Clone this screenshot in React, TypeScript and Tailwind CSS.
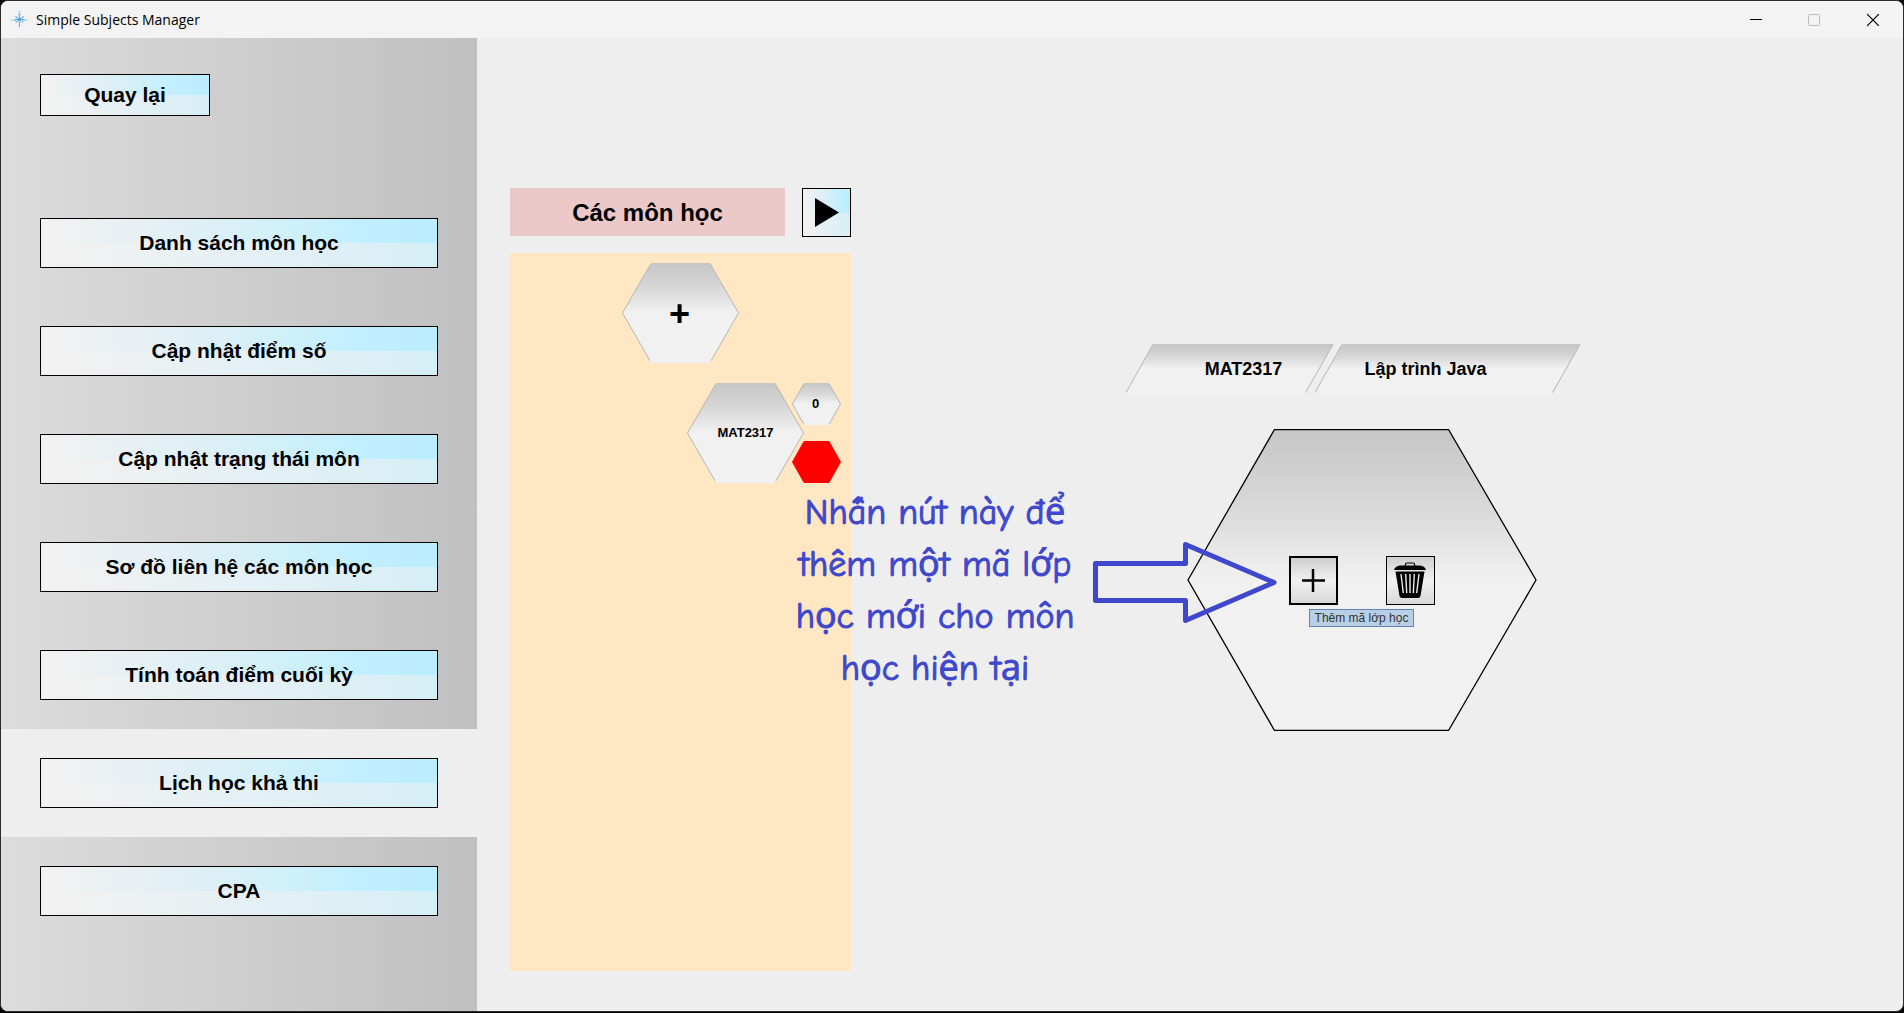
import type { ReactNode } from "react";

const menu = [
  "Danh sách môn học",
  "Cập nhật điểm số",
  "Cập nhật trạng thái môn",
  "Sơ đồ liên hệ các môn học",
  "Tính toán điểm cuối kỳ",
  "Lịch học khả thi",
  "CPA",
];
const activeItem = "Lịch học khả thi";

function GlossyButton({ className, label, children }: { className: string; label?: string; children: ReactNode }) {
  return (
    <button
      aria-label={label}
      className={`relative isolate flex items-center justify-center border border-black text-[21px] leading-6 font-bold ${className}`}
    >
      <span className="absolute inset-0 -z-10 flex flex-col">
        <span className="flex-1 bg-[linear-gradient(to_right,#f1f1f1_4%,#e0eff6_38%,#d2f0f8_58%,#c3efff_78%,#bbedff_96%)]" />
        <span className="flex-1 bg-[linear-gradient(to_right,#f1f1f1_8%,#e2f0f5_60%,#d6eff6_100%)]" />
      </span>
      {children}
    </button>
  );
}

type ShapeProps = {
  id: string;
  w: number;
  h: number;
  points: string;
  stroke?: string;
  strokeWidth?: number;
  fill?: string;
};

function Shape({ id, w, h, points, stroke = "#b4b4b4", strokeWidth = 1, fill }: ShapeProps) {
  return (
    <svg className="absolute inset-0 -z-10" width={w} height={h} viewBox={`0 0 ${w} ${h}`} aria-hidden="true">
      <defs>
        <linearGradient id={id} x1="0" y1="0" x2="0" y2="1">
          <stop offset="0" stopColor="#c6c6c6" />
          <stop offset="0.25" stopColor="#d8d8d8" />
          <stop offset="0.5" stopColor="#f1f1f1" />
          <stop offset="1" stopColor="#f1f1f1" />
        </linearGradient>
        <linearGradient id={`${id}-edge`} x1="0" y1="0" x2="0" y2="1">
          <stop offset="0" stopColor="#c6c6c6" />
          <stop offset="0.03" stopColor={stroke} />
          <stop offset="0.97" stopColor={stroke} />
          <stop offset="1" stopColor="#f1f1f1" />
        </linearGradient>
      </defs>
      <polygon
        points={points}
        fill={fill ?? `url(#${id})`}
        stroke={fill ?? (stroke === "#000" ? "#000" : `url(#${id}-edge)`)}
        strokeWidth={strokeWidth}
      />
    </svg>
  );
}

const bigHex = "0.5,50 29,0.5 88,0.5 116.5,50 88,99.5 29,99.5";
const smallHex = "0.5,21 12,0.5 37,0.5 48.5,21 37,41.5 12,41.5";

function TitleBar() {
  return (
    <header className="flex h-[37px] shrink-0 items-center bg-[#f3f3f3]">
      <svg className="ml-2.5 size-[17px]" viewBox="0 0 17 17" fill="none" aria-hidden="true">
        <path d="M8.500 2v14" stroke="#5fb3dc" strokeWidth="1.200" />
        <path d="M3 9.500l2-1h7l2 1" stroke="#4fa8d8" strokeWidth="1.200" />
        <path d="M4.500 5.500l8 6M12.500 5.500l-8 6" stroke="#4fa8d8" strokeWidth="1.200" strokeDasharray="2 0.600" />
        <path d="M0 9.500l1.500-1L3 9.500M14 9.500l1.500-1 1.500 1M7 1l1.500-1L10 1M7 3l1.500 1L10 3" stroke="#9dcfe8" />
      </svg>
      <h1 className="ml-2 flex-1 font-['Open_Sans',sans-serif] text-sm">Simple Subjects Manager</h1>
      <button aria-label="Minimize" className="flex h-full w-[58px] items-center justify-center">
        <svg width="12" height="12" viewBox="0 0 12 12" stroke="#000"><path d="M0 5.5h12" /></svg>
      </button>
      <button aria-label="Maximize" disabled className="flex h-full w-[58px] items-center justify-center">
        <svg width="12" height="12" viewBox="0 0 12 12" fill="none" stroke="#bdbdbd"><rect x="0.5" y="0.5" width="11" height="11" rx="1" /></svg>
      </button>
      <button aria-label="Close" className="flex h-full w-[60px] items-center justify-center">
        <svg width="12" height="12" viewBox="0 0 12 12" stroke="#000" strokeWidth="1.2"><path d="M0 0l12 12M12 0L0 12" /></svg>
      </button>
    </header>
  );
}

function Sidebar() {
  return (
    <nav className="w-[476px] shrink-0 bg-linear-to-r from-[#dcdcdc] to-[#c0c0c0] pt-9">
      <GlossyButton className="ml-[39px] h-[42px] w-[170px]">Quay lại</GlossyButton>
      <ul className="mt-[73px]">
        {menu.map((item) => (
          <li key={item} className={`px-[39px] py-[29px] ${item === activeItem ? "bg-[#eeeeee]" : ""}`}>
            <GlossyButton className="h-[50px] w-full">{item}</GlossyButton>
          </li>
        ))}
      </ul>
    </nav>
  );
}

function SubjectList() {
  return (
    <section className="mt-[150px] ml-[33px] flex w-[341px] shrink-0 flex-col gap-4 pb-10">
      <div className="flex justify-between">
        <h2 className="flex h-12 w-[275px] items-center justify-center bg-[#ebc9c9] pt-0.5 text-2xl font-bold">Các môn học</h2>
        <GlossyButton className="size-[49px]" label="Tiếp tục">
          <svg width="24" height="29" viewBox="0 0 24 29" aria-hidden="true"><path d="M0 0l24 14.500L0 29z" /></svg>
        </GlossyButton>
      </div>
      <div className="flex flex-1 flex-col items-center gap-5 bg-[#ffe7c3] pt-2.5">
        <button className="relative isolate h-[100px] w-[117px] pt-0.5 pr-0.5 text-4xl leading-9 font-bold">
          <Shape id="add" w={117} h={100} points={bigHex} />+
        </button>
        <div className="flex self-end pr-2.5">
          <button className="relative isolate h-[100px] w-[117px] text-[13px] font-bold">
            <Shape id="subject" w={117} h={100} points={bigHex} />MAT2317
          </button>
          <div className="-ml-3 flex flex-col justify-between">
            <button className="relative isolate h-[42px] w-[49px] pr-0.5 text-[13px] font-bold">
              <Shape id="count" w={49} h={42} points={smallHex} />0
            </button>
            <button aria-label="Xóa MAT2317" className="relative isolate h-[42px] w-[49px]">
              <Shape id="remove" w={49} h={42} points={smallHex} fill="#ff0000" />
            </button>
          </div>
        </div>
      </div>
    </section>
  );
}

function Annotation() {
  return (
    <div className="pointer-events-none absolute top-[58px] -left-[395px] flex text-[#3f48cc]">
      <p className="flex w-[286px] flex-col items-center font-['Comic_Sans_MS','Comic_Neue','Open_Sans',sans-serif] text-4xl leading-[52px] whitespace-nowrap [-webkit-text-stroke:1px_#3f48cc]">
        <span>Nhấn nút này để</span>
        <span>thêm một mã lớp</span>
        <span>học mới cho môn</span>
        <span>học hiện tại</span>
      </p>
      <svg className="mt-[53px] ml-3.5" width="190" height="90" viewBox="0 0 190 90" fill="none" stroke="currentColor" strokeWidth="5" strokeLinejoin="round" aria-hidden="true">
        <path d="M3.500 23.500H93.500V4.500L182 42.500L93.500 80.500V60.500H3.500z" />
      </svg>
    </div>
  );
}

function ClassDetail() {
  return (
    <section className="mt-[306px] ml-[274px] min-w-0 flex-1">
      <div className="flex">
        <h3 className="relative isolate flex h-[50px] w-[209px] items-center justify-center pl-7 text-lg font-bold">
          <Shape id="code" w={209} h={50} points="28,0.5 208,0.5 180,49.5 0.5,49.5" />MAT2317
        </h3>
        <h3 className="relative isolate -ml-5 flex h-[50px] w-[267px] items-center justify-center pr-11 text-lg font-bold">
          <Shape id="name" w={267} h={50} points="28,0.5 266,0.5 238,49.5 0.5,49.5" />Lập trình Java
        </h3>
      </div>
      <div className="relative isolate mt-[35px] ml-[62px] flex h-[302px] w-[350px] items-center justify-center gap-12">
        <Shape id="classes" w={350} h={302} points="1,151 87.500,0.5 261.500,0.5 349,151 261.500,301.500 87.500,301.500" stroke="#000" strokeWidth={1.3} />
        <button aria-label="Thêm mã lớp học" aria-describedby="add-tip" className="relative flex size-[49px] items-center justify-center border-2 border-black bg-[linear-gradient(#cfcfcf,#f1f1f1_50%,#d8d8d8)]">
          <svg width="23" height="23" viewBox="0 0 23 23" stroke="#000" strokeWidth="2.500" aria-hidden="true"><path d="M11 0v23M0 11.500h23" /></svg>
          <span id="add-tip" role="tooltip" className="absolute top-[51px] left-[18px] flex h-[18px] w-[105px] items-center justify-center border border-[#6382bf] bg-[#b8cfe5] text-xs whitespace-nowrap text-[#333]">
            Thêm mã lớp học
          </span>
        </button>
        <button aria-label="Xóa" className="flex size-[49px] items-center justify-center border border-black bg-[linear-gradient(#cfcfcf,#f1f1f1_50%,#d8d8d8)] pr-0.5">
          <svg width="32" height="36" viewBox="0 0 32 36" aria-hidden="true">
            <path d="M11.500 4V2.200Q11.500 1 12.700 1H19.300Q20.500 1 20.500 2.200V4" fill="none" stroke="#000" strokeWidth="1.200" />
            <path d="M0 8Q1 4 6 3.500H26Q31 4 32 8z" />
            <path d="M1.500 9.500H30.500L26.500 34Q26.200 36 24 36H8Q5.800 36 5.500 34z" />
            <path d="M7 12l2.300 19M11.700 12l1 19M16 12v19M20.300 12l-1 19M25 12l-2.300 19" stroke="#ececec" strokeWidth="1.400" fill="none" />
          </svg>
        </button>
        <Annotation />
      </div>
    </section>
  );
}

export default function App() {
  return (
    <div className="flex min-h-screen flex-col bg-black font-['Liberation_Sans',Arial,sans-serif] text-black">
      <div className="mb-px flex flex-1 flex-col overflow-hidden rounded-lg border border-[#2b2b2b] bg-[#eeeeee]">
        <TitleBar />
        <main className="flex flex-1">
          <Sidebar />
          <SubjectList />
          <ClassDetail />
        </main>
      </div>
    </div>
  );
}
